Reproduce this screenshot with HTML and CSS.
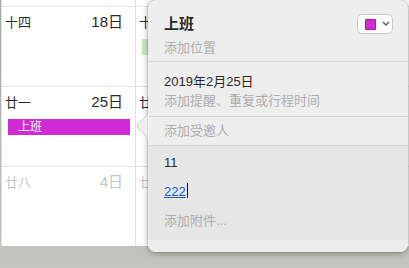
FILE: index.html
```html
<!DOCTYPE html>
<html lang="zh-CN">
<head>
    <meta charset="UTF-8">
    <title>日历</title>
    <link rel="stylesheet" href="styles.css">
</head>
<body>
    <div class="calendar">
        <div class="day"></div>
        <div class="day"></div>

        <div class="day">
            <div class="day-head"><span class="lunar">十四</span><span class="date">18日</span></div>
        </div>
        <div class="day">
            <div class="day-head"><span class="lunar">十五</span><span class="date">19日</span></div>
            <div class="event green"></div>
        </div>

        <div class="day">
            <div class="day-head"><span class="lunar">廿一</span><span class="date">25日</span></div>
            <div class="event purple">上班</div>
        </div>
        <div class="day">
            <div class="day-head"><span class="lunar">廿二</span><span class="date">26日</span></div>
        </div>

        <div class="day other">
            <div class="day-head"><span class="lunar">廿八</span><span class="date">4日</span></div>
        </div>
        <div class="day other">
            <div class="day-head"><span class="lunar">廿九</span><span class="date">5日</span></div>
        </div>
    </div>

    <div class="popover">
        <svg class="arrow" width="13" height="30" viewBox="0 0 13 30">
            <path d="M12 0 C12 6 1 12 1 15 C1 18 12 24 12 30 Z" fill="#eeeeee" stroke="#c9c9c9" stroke-width="1"/>
            <rect x="12" y="0" width="1" height="30" fill="#eeeeee"/>
        </svg>

        <div class="section header">
            <div class="title-row">
                <div class="title">上班</div>
                <button class="color-btn">
                    <span class="swatch"></span>
                    <svg width="8" height="6" viewBox="0 0 8 6"><path d="M1 1 L4 4 L7 1" fill="none" stroke="#555" stroke-width="1.3"/></svg>
                </button>
            </div>
            <div class="hint">添加位置</div>
        </div>

        <div class="section dates">
            <div class="text">2019年2月25日</div>
            <div class="hint">添加提醒、重复或行程时间</div>
        </div>

        <div class="section invitees">
            <div class="hint">添加受邀人</div>
        </div>

        <div class="section notes">
            <div class="text">11</div>
            <div class="text"><a class="link" href="#">222</a><span class="caret"></span></div>
            <div class="hint">添加附件...</div>
        </div>

        <div class="footer"></div>
    </div>
</body>
</html>
```

FILE: styles.css
```css
html, body {
    margin: 0;
    padding: 0;
    width: 409px;
    height: 268px;
    overflow: hidden;
    font-family: "Liberation Sans", "Noto Sans CJK SC", sans-serif;
    background: linear-gradient(#a9aaa3, #c3c4be);
    position: relative;
}

.calendar {
    display: grid;
    grid-template-columns: 133px 1fr;
    grid-template-rows: 6px 79px 79px 79px;
    gap: 1px;
    padding-left: 1px;
    margin-left: 1px;
    background: #e1e1e1;
    height: 246px;
    box-sizing: border-box;
}

.day {
    background: #fff;
}

.day-head {
    display: flex;
    justify-content: space-between;
    align-items: baseline;
    padding: 7px 12px 0 3px;
    height: 16px;
    line-height: 16px;
    color: #2a2a2a;
}

.lunar {
    font-size: 13px;
}

.date {
    font-size: 15px;
}

.other .day-head {
    color: #c4c4c4;
}

.event {
    margin: 9px 5px 0 6px;
    height: 16px;
    line-height: 16px;
    font-size: 12px;
    padding-left: 10px;
    color: #fff;
}

.event.purple {
    background: #d12bd6;
}

.event.green {
    background: #c8e9c3;
}

.popover {
    position: absolute;
    left: 148px;
    top: 0;
    width: 260px;
    height: 252px;
    background: #eeeeee;
    border-radius: 8px;
    box-shadow: 0 1px 6px rgba(0, 0, 0, 0.35), 0 0 0 0.5px rgba(0, 0, 0, 0.15);
    display: flex;
    flex-direction: column;
}

.arrow {
    position: absolute;
    left: -12px;
    top: 111px;
}

.section {
    padding: 0 16px;
    border-bottom: 1px solid #d7d7d7;
    font-size: 13px;
    line-height: 19px;
}

.hint {
    color: #adadad;
}

.text {
    color: #2a2a2a;
}

.header {
    height: 62px;
    box-sizing: border-box;
    padding-top: 13px;
}

.title-row {
    display: flex;
    justify-content: space-between;
    align-items: flex-start;
    height: 21px;
}

.title {
    font-size: 15px;
    font-weight: bold;
    color: #2a2a2a;
    line-height: 21px;
}

.color-btn {
    display: flex;
    align-items: center;
    gap: 6px;
    margin-top: 1px;
    margin-right: -1px;
    width: 36px;
    height: 20px;
    padding: 0 0 0 7px;
    background: #fff;
    border: 1px solid #c9c9c9;
    border-radius: 5px;
    box-sizing: border-box;
}

.swatch {
    width: 9px;
    height: 9px;
    background: #d12bd6;
    border: 1px solid #a215a8;
    border-radius: 1px;
}

.header .hint {
    margin-top: 4px;
}

.dates {
    height: 55px;
    box-sizing: border-box;
    padding-top: 10px;
}

.invitees {
    height: 29px;
    box-sizing: border-box;
    padding-top: 4px;
}

.notes {
    flex: 1;
    background: #e6e6e6;
    border-bottom: none;
    padding-top: 2px;
}

.notes > div {
    height: 29px;
    line-height: 29px;
}

.link {
    color: #1a5ccc;
    text-decoration: underline;
}

.caret {
    display: inline-block;
    width: 1px;
    height: 15px;
    background: #111;
    vertical-align: -2px;
    margin-left: 1px;
}

.footer {
    height: 12px;
    background: #ececec;
    border-radius: 0 0 8px 8px;
}
```
